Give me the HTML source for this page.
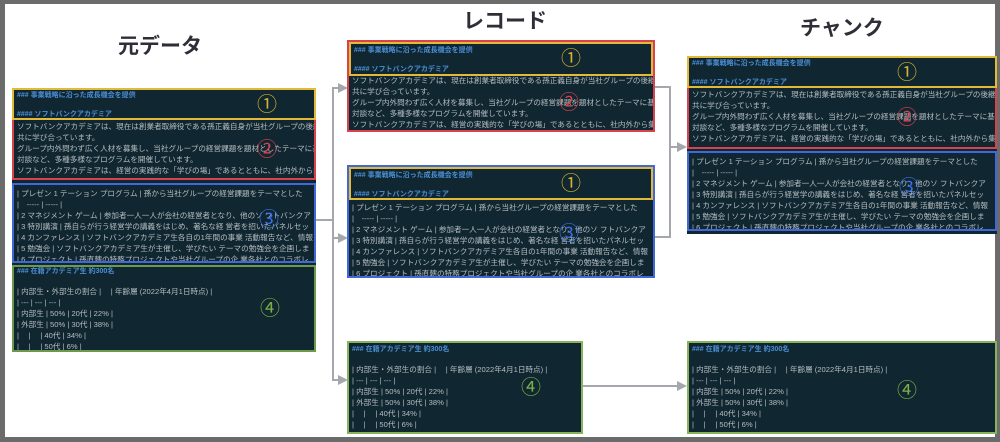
<!DOCTYPE html>
<html><head><meta charset="utf-8"><style>
*{margin:0;padding:0;box-sizing:border-box}
body{width:1000px;height:442px;background:#6b6b6b;position:relative;overflow:hidden;font-family:"Liberation Sans","Noto Sans CJK JP",sans-serif}
#pg{position:absolute;left:5px;top:4px;width:990px;height:433px;background:#fff}
.t{position:absolute;font-size:21px;font-weight:bold;color:#2e2e38;white-space:nowrap}
.box{position:absolute;background:#102731;overflow:hidden}
.s{position:absolute;left:0;right:0;overflow:hidden}
.s p{display:block;height:11px;overflow:hidden;font-size:7.6px;line-height:11px;color:#b6bcc0;white-space:nowrap;padding-left:3px}
.s p.h{color:#4b8fd6;font-weight:bold;height:9.5px;line-height:9.5px;font-size:7px}
.s p.b{height:9.5px}
.n{position:absolute;font-size:20px;line-height:20px}
.ln{position:absolute;background:#a4a7ab}
.ar{position:absolute;width:0;height:0;border-top:5px solid transparent;border-bottom:5px solid transparent;border-left:10px solid #a4a7ab}
</style></head><body>
<div id="pg"></div>
<div class="t" style="left:118px;top:30px">元データ</div>
<div class="t" style="left:463px;top:5px">レコード</div>
<div class="t" style="left:800px;top:12px">チャンク</div>

<!-- left box -->
<div class="box" style="left:12px;top:88px;width:304px;height:264px">
 <div class="s" style="top:0;height:32px;border:2px solid #e3b93a;padding-top:1px"><p class="h">### 事業戦略に沿った成長機会を提供</p><p class="b"></p><p class="h">#### ソフトバンクアカデミア</p><span class="n" style="left:243px;top:5px;color:#d6b32e">①</span></div>
 <div class="s" style="top:32px;height:60px;border:2px solid #d8434b;border-top:none;padding-top:1px"><p>ソフトバンクアカデミアは、現在は創業者取締役である孫正義自身が当社グループの後継者</p><p>共に学び合っています。</p><p>グループ内外問わず広く人材を募集し、当社グループの経営課題を題材としたテーマに基づ</p><p>対談など、多種多様なプログラムを開催しています。</p><p>ソフトバンクアカデミアは、経営の実践的な「学びの場」であるとともに、社内外から集結</p><span class="n" style="left:243px;top:20px;color:#d8434b">②</span></div>
 <div class="s" style="top:95px;height:80px;border:2px solid #4168d8;padding-top:3px"><p>| プレゼン 1 テーション プログラム | 孫から当社グループの経営課題をテーマとした</p><p>|　----- | ----- |</p><p>| 2 マネジメント ゲーム | 参加者一人一人が会社の経営者となり、他のソ フトバンクア</p><p>| 3 特別講演 | 孫自らが行う経営学の講義をはじめ、著名な経 営者を招いたパネルセッ</p><p>| 4 カンファレンス | ソフトバンクアカデミア生各自の1年間の事業 活動報告など、情報</p><p>| 5 勉強会 | ソフトバンクアカデミア生が主催し、学びたい テーマの勉強会を企画しま</p><p>| 6 プロジェクト | 孫直轄の特務プロジェクトや当社グループの企 業各社とのコラボレ</p><span class="n" style="left:245px;top:25px;color:#3b6fe6">③</span></div>
 <div class="s" style="top:177px;height:87px;border:2px solid #6c9a4a"><p class="h">### 在籍アカデミア生 約300名</p><p class="b"></p><p>| 内部生・外部生の割合 | 　| 年齢層 (2022年4月1日時点) |</p><p>| --- | --- | --- |</p><p>| 内部生 | 50% | 20代 | 22% |</p><p>| 外部生 | 50% | 30代 | 38% |</p><p>| 　| 　| 40代 | 34% |</p><p>| 　| 　| 50代 | 6% |</p><span class="n" style="left:246px;top:32px;color:#7cb046">④</span></div>
</div>

<!-- connectors left -->
<div class="ln" style="left:316px;top:219px;width:18px;height:2px"></div>
<div class="ln" style="left:332px;top:87px;width:2px;height:294px"></div>
<div class="ln" style="left:332px;top:87px;width:8px;height:2px"></div><div class="ar" style="left:338px;top:83px"></div>
<div class="ln" style="left:332px;top:237px;width:8px;height:2px"></div><div class="ar" style="left:338px;top:233px"></div>
<div class="ln" style="left:332px;top:379px;width:8px;height:2px"></div><div class="ar" style="left:338px;top:375px"></div>

<!-- middle 1 -->
<div class="box" style="left:347px;top:40px;width:308px;height:92px;border:2px solid #d8434b">
 <div class="s" style="top:0;height:34px;border:2px solid #e3b93a;padding-top:2px"><p class="h">### 事業戦略に沿った成長機会を提供</p><p class="b"></p><p class="h">#### ソフトバンクアカデミア</p><span class="n" style="left:210px;top:5px;color:#d6b32e">①</span></div>
 <div class="s" style="top:33px;height:60px"><p>ソフトバンクアカデミアは、現在は創業者取締役である孫正義自身が当社グループの後継者</p><p>共に学び合っています。</p><p>グループ内外問わず広く人材を募集し、当社グループの経営課題を題材としたテーマに基づ</p><p>対談など、多種多様なプログラムを開催しています。</p><p>ソフトバンクアカデミアは、経営の実践的な「学びの場」であるとともに、社内外から集結</p><span class="n" style="left:210px;top:18px;color:#d8434b">②</span></div>
</div>
<!-- middle 2 -->
<div class="box" style="left:347px;top:165px;width:308px;height:113px;border:2px solid #4168d8">
 <div class="s" style="top:0;height:33px;border:2px solid #e3b93a;padding-top:2px"><p class="h">### 事業戦略に沿った成長機会を提供</p><p class="b"></p><p class="h">#### ソフトバンクアカデミア</p><span class="n" style="left:210px;top:5px;color:#d6b32e">①</span></div>
 <div class="s" style="top:33px;height:80px;padding-top:2px"><p>| プレゼン 1 テーション プログラム | 孫から当社グループの経営課題をテーマとした</p><p>|　----- | ----- |</p><p>| 2 マネジメント ゲーム | 参加者一人一人が会社の経営者となり、他のソ フトバンクア</p><p>| 3 特別講演 | 孫自らが行う経営学の講義をはじめ、著名な経 営者を招いたパネルセッ</p><p>| 4 カンファレンス | ソフトバンクアカデミア生各自の1年間の事業 活動報告など、情報</p><p>| 5 勉強会 | ソフトバンクアカデミア生が主催し、学びたい テーマの勉強会を企画しま</p><p>| 6 プロジェクト | 孫直轄の特務プロジェクトや当社グループの企 業各社とのコラボレ</p><span class="n" style="left:210px;top:24px;color:#3b6fe6">③</span></div>
</div>
<!-- middle 3 -->
<div class="box" style="left:347px;top:341px;width:236px;height:93px;border:2px solid #86b35c">
 <div class="s" style="top:2px;height:90px"><p class="h">### 在籍アカデミア生 約300名</p><p class="b"></p><p>| 内部生・外部生の割合 | 　| 年齢層 (2022年4月1日時点) |</p><p>| --- | --- | --- |</p><p>| 内部生 | 50% | 20代 | 22% |</p><p>| 外部生 | 50% | 30代 | 38% |</p><p>| 　| 　| 40代 | 34% |</p><p>| 　| 　| 50代 | 6% |</p><span class="n" style="left:172px;top:33px;color:#7cb046">④</span></div>
</div>

<!-- connectors right -->
<div class="ln" style="left:655px;top:86px;width:16px;height:2px"></div>
<div class="ln" style="left:669px;top:86px;width:2px;height:152px"></div>
<div class="ln" style="left:655px;top:236px;width:16px;height:2px"></div>
<div class="ln" style="left:669px;top:146px;width:10px;height:2px"></div><div class="ar" style="left:677px;top:142px"></div>
<div class="ln" style="left:583px;top:385px;width:96px;height:2px"></div><div class="ar" style="left:677px;top:381px"></div>

<!-- right 1 -->
<div class="box" style="left:687px;top:56px;width:310px;height:178px">
 <div class="s" style="top:0;height:32px;border:2px solid #e3b93a;padding-top:1px"><p class="h">### 事業戦略に沿った成長機会を提供</p><p class="b"></p><p class="h">#### ソフトバンクアカデミア</p><span class="n" style="left:208px;top:5px;color:#d6b32e">①</span></div>
 <div class="s" style="top:32px;height:61px;border:2px solid #d8434b;border-top:none;padding-top:1px"><p>ソフトバンクアカデミアは、現在は創業者取締役である孫正義自身が当社グループの後継者</p><p>共に学び合っています。</p><p>グループ内外問わず広く人材を募集し、当社グループの経営課題を題材としたテーマに基づ</p><p>対談など、多種多様なプログラムを開催しています。</p><p>ソフトバンクアカデミアは、経営の実践的な「学びの場」であるとともに、社内外から集結</p><span class="n" style="left:208px;top:20px;color:#d8434b">②</span></div>
 <div class="s" style="top:95px;height:80px;border:2px solid #4168d8;padding-top:3px"><p>| プレゼン 1 テーション プログラム | 孫から当社グループの経営課題をテーマとした</p><p>|　----- | ----- |</p><p>| 2 マネジメント ゲーム | 参加者一人一人が会社の経営者となり、他のソ フトバンクア</p><p>| 3 特別講演 | 孫自らが行う経営学の講義をはじめ、著名な経 営者を招いたパネルセッ</p><p>| 4 カンファレンス | ソフトバンクアカデミア生各自の1年間の事業 活動報告など、情報</p><p>| 5 勉強会 | ソフトバンクアカデミア生が主催し、学びたい テーマの勉強会を企画しま</p><p>| 6 プロジェクト | 孫直轄の特務プロジェクトや当社グループの企 業各社とのコラボレ</p><span class="n" style="left:210px;top:25px;color:#3b6fe6">③</span></div>
</div>
<!-- right 2 -->
<div class="box" style="left:687px;top:341px;width:310px;height:93px;border:2px solid #86b35c">
 <div class="s" style="top:2px;height:90px"><p class="h">### 在籍アカデミア生 約300名</p><p class="b"></p><p>| 内部生・外部生の割合 | 　| 年齢層 (2022年4月1日時点) |</p><p>| --- | --- | --- |</p><p>| 内部生 | 50% | 20代 | 22% |</p><p>| 外部生 | 50% | 30代 | 38% |</p><p>| 　| 　| 40代 | 34% |</p><p>| 　| 　| 50代 | 6% |</p><span class="n" style="left:208px;top:36px;color:#7cb046">④</span></div>
</div>
</body></html>
